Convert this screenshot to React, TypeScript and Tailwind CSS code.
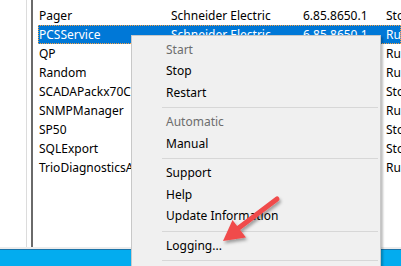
import React from "react";

type Service = { name: string; vendor: string; version: string; status: string };

const services: Service[] = [
  { name: "Pager", vendor: "Schneider Electric", version: "6.85.8650.1", status: "Stopped" },
  { name: "PCSService", vendor: "Schneider Electric", version: "6.85.8650.1", status: "Running" },
  { name: "QP", vendor: "", version: "", status: "Running" },
  { name: "Random", vendor: "", version: "", status: "Running" },
  { name: "SCADAPackx70Config", vendor: "", version: "", status: "Stopped" },
  { name: "SNMPManager", vendor: "", version: "", status: "Running" },
  { name: "SP50", vendor: "", version: "", status: "Stopped" },
  { name: "SQLExport", vendor: "", version: "", status: "Stopped" },
  { name: "TrioDiagnosticsAdapter", vendor: "", version: "", status: "Running" },
];

type MenuEntry = { label: string; disabled?: boolean } | "sep";

const menu: MenuEntry[] = [
  { label: "Start", disabled: true },
  { label: "Stop" },
  { label: "Restart" },
  "sep",
  { label: "Automatic", disabled: true },
  { label: "Manual" },
  "sep",
  { label: "Support" },
  { label: "Help" },
  { label: "Update Information" },
  "sep",
  { label: "Logging..." },
  "sep",
];

function ServiceRow({ s, selected }: { s: Service; selected: boolean }) {
  return (
    <div
      className={`flex h-[19px] items-center whitespace-nowrap ${
        selected ? "bg-[#0078d7] text-white outline-1 outline-dotted outline-offset-[-1px] outline-[#f7a145]" : "text-black"
      }`}
    >
      <div className="w-[130px] shrink-0 overflow-hidden pl-[1px]">{s.name}</div>
      <div className="w-[131px] shrink-0 overflow-hidden pl-[3px]">{s.vendor}</div>
      <div className="w-[83px] shrink-0 overflow-hidden pl-[4px]">{s.version}</div>
      <div className="shrink-0 pl-[4px]">{s.status}</div>
    </div>
  );
}

function ContextMenu() {
  return (
    <div className="absolute left-[131px] top-[35px] w-[250px] h-[240px] bg-[#f0f0f0] border border-[#c8c8c8] pt-[3px] shadow-[2px_2px_2px_rgba(0,0,0,0.25)]">
      {menu.map((m, i) =>
        m === "sep" ? (
          <div key={i} className="h-[8px] flex items-center ml-[30px] mr-[2px]">
            <div className="h-px w-full bg-[#d7d7d7]" />
          </div>
        ) : (
          <div
            key={i}
            className={`h-[21.5px] flex items-center pl-[34px] ${m.disabled ? "text-[#6d6d6d]" : "text-black"}`}
          >
            {m.label}
          </div>
        )
      )}
    </div>
  );
}

function Arrow() {
  return (
    <svg className="absolute left-0 top-0" width="401" height="266" viewBox="0 0 401 266">
      <defs>
        <filter id="sh" x="-20%" y="-20%" width="140%" height="140%">
          <feDropShadow dx="1.5" dy="2.5" stdDeviation="1.6" floodColor="#000" floodOpacity="0.35" />
        </filter>
      </defs>
      <g filter="url(#sh)">
        <line x1="277" y1="199" x2="236" y2="230" stroke="#f04b4b" strokeWidth="5" strokeLinecap="round" />
        <polygon points="223,241 232.5,220 246,237.5" fill="#f04b4b" />
      </g>
    </svg>
  );
}

export default function App() {
  return (
    <div
      className="relative w-[401px] h-[266px] overflow-hidden bg-white text-[12px] flex flex-col"
      style={{ fontFamily: '"Segoe UI", "Noto Sans", sans-serif' }}
    >
      <div className="flex flex-1 border-b-2 border-[#ececec]">
        <div className="w-[27px] shrink-0 border-r border-[#dcdcdc]" />
        <div className="w-[4px] shrink-0" />
        <div className="flex-1 border-l-2 border-[#6a6a6a] pl-[5px] pt-[6px] overflow-hidden">
          {services.map((s) => (
            <ServiceRow key={s.name} s={s} selected={s.name === "PCSService"} />
          ))}
        </div>
      </div>
      <div className="h-[17px] shrink-0 bg-[#03acef] border-t border-[#1b73a8]" />
      <ContextMenu />
      <Arrow />
    </div>
  );
}
